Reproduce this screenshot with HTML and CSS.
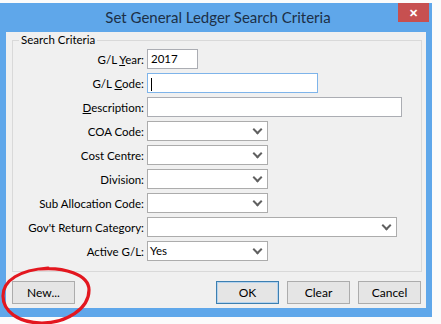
FILE: index.html
```html
<!DOCTYPE html>
<html lang="en">
<head>
    <meta charset="UTF-8">
    <title>Set General Ledger Search Criteria</title>
    <link rel="stylesheet" href="styles.css">
</head>
<body>
    <div class="window">
        <div class="titlebar">
            <div class="title">Set General Ledger Search Criteria</div>
            <div class="close">&#x2715;</div>
        </div>
        <div class="client">
            <fieldset class="criteria">
                <legend>Search Criteria</legend>
                <div class="form">
                    <label>G/L <u>Y</u>ear:</label>
                    <div class="field w-year">2017</div>

                    <label>G/L <u>C</u>ode:</label>
                    <div class="field w-code focus"><span class="caret"></span></div>

                    <label><u>D</u>escription:</label>
                    <div class="field w-desc"></div>

                    <label>COA Code:</label>
                    <div class="field combo w-combo"><span class="val"></span><span class="arrow"></span></div>

                    <label>Cost Centre:</label>
                    <div class="field combo w-combo"><span class="val"></span><span class="arrow"></span></div>

                    <label>Division:</label>
                    <div class="field combo w-combo"><span class="val"></span><span class="arrow"></span></div>

                    <label>Sub Allocation Code:</label>
                    <div class="field combo w-combo"><span class="val"></span><span class="arrow"></span></div>

                    <label>Gov't Return Category:</label>
                    <div class="field combo w-gov"><span class="val"></span><span class="arrow"></span></div>

                    <label>Active G/L:</label>
                    <div class="field combo w-combo"><span class="val">Yes</span><span class="arrow"></span></div>
                </div>
            </fieldset>
            <div class="buttons">
                <button class="btn">New...</button>
                <div class="spacer"></div>
                <button class="btn default">OK</button>
                <button class="btn">Clear</button>
                <button class="btn">Cancel</button>
            </div>
        </div>
    </div>
    <svg class="circle" width="94" height="60" viewBox="0 0 94 60">
        <path d="M40 3 C63 1 89 8 89 24 C89 43 66 57 42 57 C18 57 3 45 3 30 C3 14 20 4 48 2" fill="none" stroke="#e3171f" stroke-width="3.2" stroke-linecap="round"/>
    </svg>
</body>
</html>
```

FILE: styles.css
```css
body { margin: 0; background: #fbfbfb; font-family: Lato, "Liberation Sans", sans-serif; font-size: 11.5px; color: #000; position: relative; height: 324px; overflow: hidden; }
.window { margin-top: 3px; width: 432px; background: #5fa7ea; padding: 0 6px 9px 6px; box-sizing: border-box; }
.titlebar { height: 29px; display: flex; align-items: flex-start; position: relative; }
.title { flex: 1; text-align: center; font-size: 15px; color: #1c2f46; line-height: 28px; padding-left: 4px; }
.close { position: absolute; right: -3px; top: 0; width: 31px; height: 19px; background: #c75050; color: #fff; font-size: 11px; font-weight: bold; display: flex; align-items: center; justify-content: center; }
.client { background: #f0f0f0; padding: 1px 4px 4px 6px; }

.criteria { margin: 0; border: 1px solid #d9d9d9; padding: 2px 0 10px 0; }
.criteria legend { padding: 0 2px; margin-left: 6px; line-height: 14px; }
.form { display: grid; grid-template-columns: 131px max-content; column-gap: 3px; row-gap: 4px; align-items: center; }
.form label { text-align: right; white-space: nowrap; }
.field { height: 20px; box-sizing: border-box; border: 1px solid #abadb3; background: #fff; line-height: 18px; padding: 0 3px; }
.field.focus { border-color: #7eb4ea; }
.caret { display: inline-block; width: 1px; height: 13px; background: #000; vertical-align: middle; margin-left: 0; }
.combo { border-color: #acacac; display: flex; align-items: center; padding: 0 0 0 2px; }
.combo .val { flex: 1; }
.arrow { width: 7px; height: 7px; margin-right: 6px; border-right: 2px solid #606060; border-bottom: 2px solid #606060; box-sizing: border-box; transform: translateY(-2px) rotate(45deg); }
.w-year { width: 51px; }
.w-code { width: 171px; }
.w-desc { width: 255px; }
.w-combo { width: 121px; }
.w-gov { width: 250px; }

.buttons { display: flex; gap: 8px; margin-top: 9px; padding-right: 1px; }
.spacer { flex: 1; }
.btn { width: 63px; height: 23px; font-family: inherit; font-size: 12px; background: #e5e5e5; border: 1px solid #acacac; padding: 0; color: #000; }
.btn.default { border-color: #3c7fb1; box-shadow: inset 0 0 0 1px #b5d3ee; }

.circle { position: absolute; left: 0; top: 266px; }
```
